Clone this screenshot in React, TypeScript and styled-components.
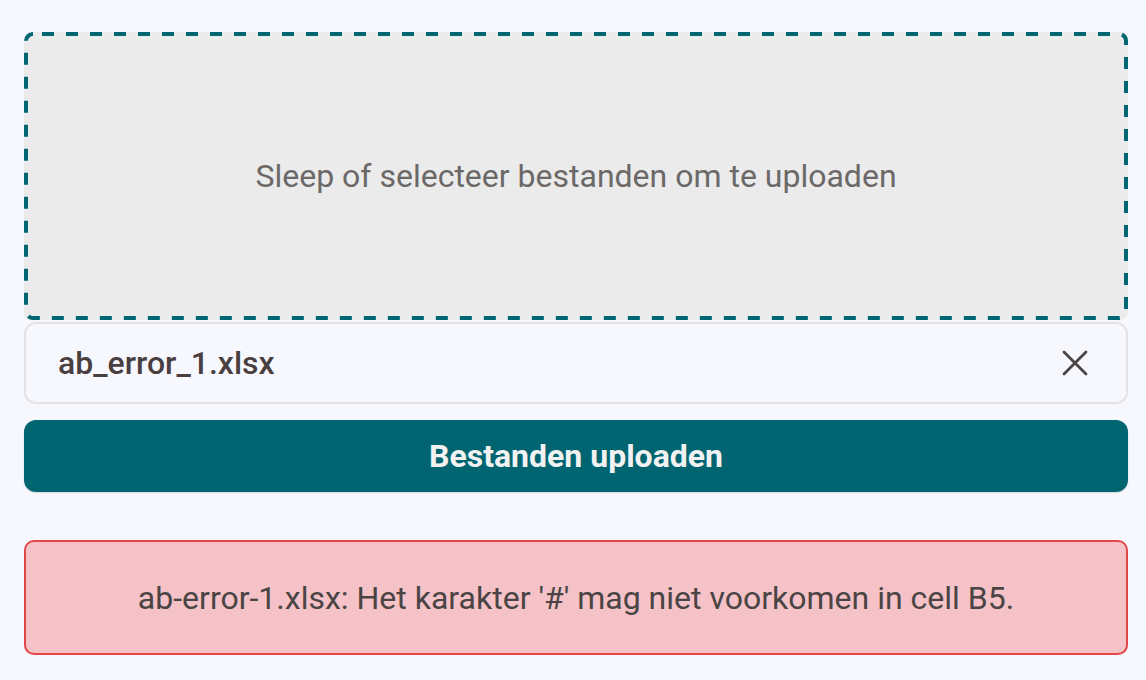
import styled, { createGlobalStyle } from "styled-components";

const GlobalStyle = createGlobalStyle`
  html, body {
    margin: 0;
    padding: 0;
    background: #f7f8fd;
    font-family: Roboto, "Liberation Sans", sans-serif;
  }
`;

const Page = styled.div`
  padding: 32px 18px 0 24px;
  display: flex;
  flex-direction: column;
`;

const DropZone = styled.div`
  position: relative;
  height: 288px;
  border-radius: 8px;
  background: #ebebeb;
  display: flex;
  align-items: center;
  justify-content: center;
  color: #6b6868;
  font-size: 32px;
  cursor: pointer;
`;

// dashed outline drawn as svg so the dash length matches (12 on / 12 off)
const DashFrame = styled.svg`
  position: absolute;
  inset: 0;
  width: 100%;
  height: 100%;
  pointer-events: none;
  overflow: visible;

  rect {
    x: 2px;
    y: 2px;
    width: calc(100% - 4px);
    height: calc(100% - 4px);
    rx: 7px;
    fill: none;
    stroke: #006672;
    stroke-width: 4px;
    stroke-dasharray: 12px 12px;
    stroke-dashoffset: -9px;
  }
`;

const FileRow = styled.div`
  margin-top: 2px;
  height: 78px;
  border: 2px solid #e3e3e7;
  border-radius: 12px;
  display: flex;
  align-items: center;
  justify-content: space-between;
  padding: 0 38px 0 32px;
`;

const FileName = styled.span`
  font-size: 32px;
  font-weight: 500;
  color: #4a3f40;
`;

const CloseButton = styled.button`
  border: none;
  background: none;
  padding: 0;
  display: flex;
  color: #4a4444;
  cursor: pointer;
`;

const UploadButton = styled.button`
  margin-top: 16px;
  height: 72px;
  border: none;
  border-radius: 12px;
  background: #006571;
  color: #f2f2f2;
  font-family: Roboto, "Liberation Sans", sans-serif;
  font-size: 32px;
  font-weight: 700;
  box-shadow: 0 1px 2px rgba(0, 0, 0, 0.12);
  cursor: pointer;
`;

const ErrorBox = styled.div`
  margin-top: 48px;
  height: 111px;
  border: 2px solid #e24646;
  border-radius: 10px;
  background: #f5c2c7;
  display: flex;
  align-items: center;
  justify-content: center;
  color: #4a4444;
  font-size: 32px;
`;

const CloseIcon = () => (
  <svg width="26" height="26" viewBox="0 0 26 26" fill="none">
    <path
      d="M2 2 L24 24 M24 2 L2 24"
      stroke="currentColor"
      strokeWidth="2.8"
      strokeLinecap="round"
    />
  </svg>
);

export default function App() {
  return (
    <>
      <GlobalStyle />
      <Page>
        <DropZone>
          <DashFrame>
            <rect />
          </DashFrame>
          Sleep of selecteer bestanden om te uploaden
        </DropZone>
        <FileRow>
          <FileName>ab_error_1.xlsx</FileName>
          <CloseButton aria-label="Verwijderen">
            <CloseIcon />
          </CloseButton>
        </FileRow>
        <UploadButton>Bestanden uploaden</UploadButton>
        <ErrorBox>
          ab-error-1.xlsx: Het karakter '#' mag niet voorkomen in cell B5.
        </ErrorBox>
      </Page>
    </>
  );
}
